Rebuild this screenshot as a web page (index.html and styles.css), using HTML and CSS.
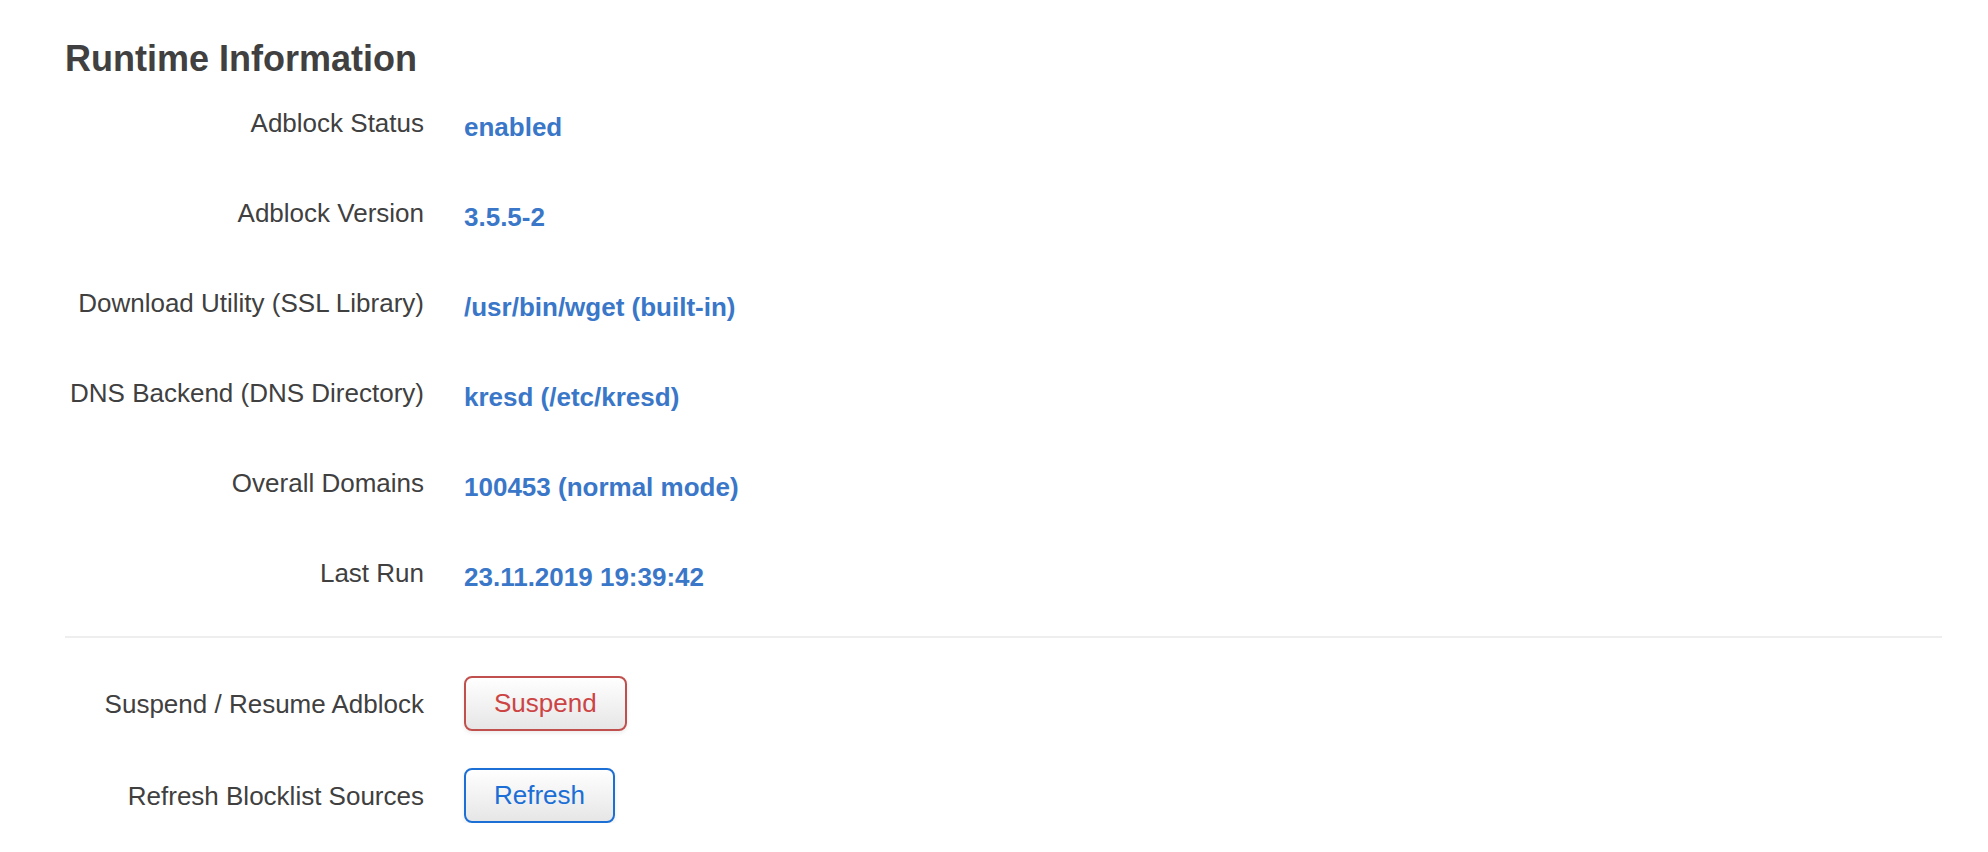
FILE: index.html
```html
<!DOCTYPE html>
<html lang="en">
<head>
    <meta charset="UTF-8">
    <meta name="viewport" content="width=device-width, initial-scale=1.0">
    <title>Adblock - Runtime Information</title>
    <link rel="stylesheet" href="styles.css">
</head>
<body>
    <div class="section">
        <h3>Runtime Information</h3>
        <div class="info-list">
            <div class="row">
                <div class="label">Adblock Status</div>
                <div class="value">enabled</div>
            </div>
            <div class="row">
                <div class="label">Adblock Version</div>
                <div class="value">3.5.5-2</div>
            </div>
            <div class="row">
                <div class="label">Download Utility (SSL Library)</div>
                <div class="value">/usr/bin/wget (built-in)</div>
            </div>
            <div class="row">
                <div class="label">DNS Backend (DNS Directory)</div>
                <div class="value">kresd (/etc/kresd)</div>
            </div>
            <div class="row">
                <div class="label">Overall Domains</div>
                <div class="value">100453 (normal mode)</div>
            </div>
            <div class="row">
                <div class="label">Last Run</div>
                <div class="value">23.11.2019 19:39:42</div>
            </div>
        </div>
        <hr>
        <div class="actions">
            <div class="row action-row">
                <div class="label">Suspend / Resume Adblock</div>
                <button class="btn btn-reset">Suspend</button>
            </div>
            <div class="row action-row">
                <div class="label">Refresh Blocklist Sources</div>
                <button class="btn btn-apply">Refresh</button>
            </div>
        </div>
    </div>
</body>
</html>
```

FILE: styles.css
```css
body {
    margin: 0;
    font-family: "Liberation Sans", Arial, sans-serif;
    color: #404040;
    background: #fff;
}
.section {
    padding: 37px 46px 0 65px;
}
h3 {
    margin: 0;
    font-size: 36px;
    line-height: 43px;
    font-weight: bold;
    color: #404040;
}
.info-list {
    display: flex;
    flex-direction: column;
    gap: 50px;
    margin-top: 25px;
}
.row {
    display: flex;
    gap: 40px;
    font-size: 26px;
    line-height: 36px;
}
.label {
    width: 359px;
    flex-shrink: 0;
    text-align: right;
}
.value {
    padding-top: 4px;
    font-weight: bold;
    color: #3a77c8;
}
hr {
    margin: 41px 0 0;
    border: 0;
    border-top: 2px solid #eee;
}
.actions {
    display: flex;
    flex-direction: column;
    gap: 37px;
    margin-top: 38px;
}
.action-row {
    align-items: center;
}
.btn {
    font-family: inherit;
    font-size: 26px;
    line-height: 31px;
    padding: 10px 28px;
    border: 2px solid #ccc;
    border-radius: 8px;
    background: linear-gradient(#fff, #e6e6e6);
    box-shadow: 0 2px 4px rgba(0, 0, 0, 0.08);
    cursor: pointer;
}
.btn-reset {
    color: #c44;
    border-color: #c0504d;
}
.btn-apply {
    color: #1a6ed6;
    border-color: #1c6fd4;
}
```
